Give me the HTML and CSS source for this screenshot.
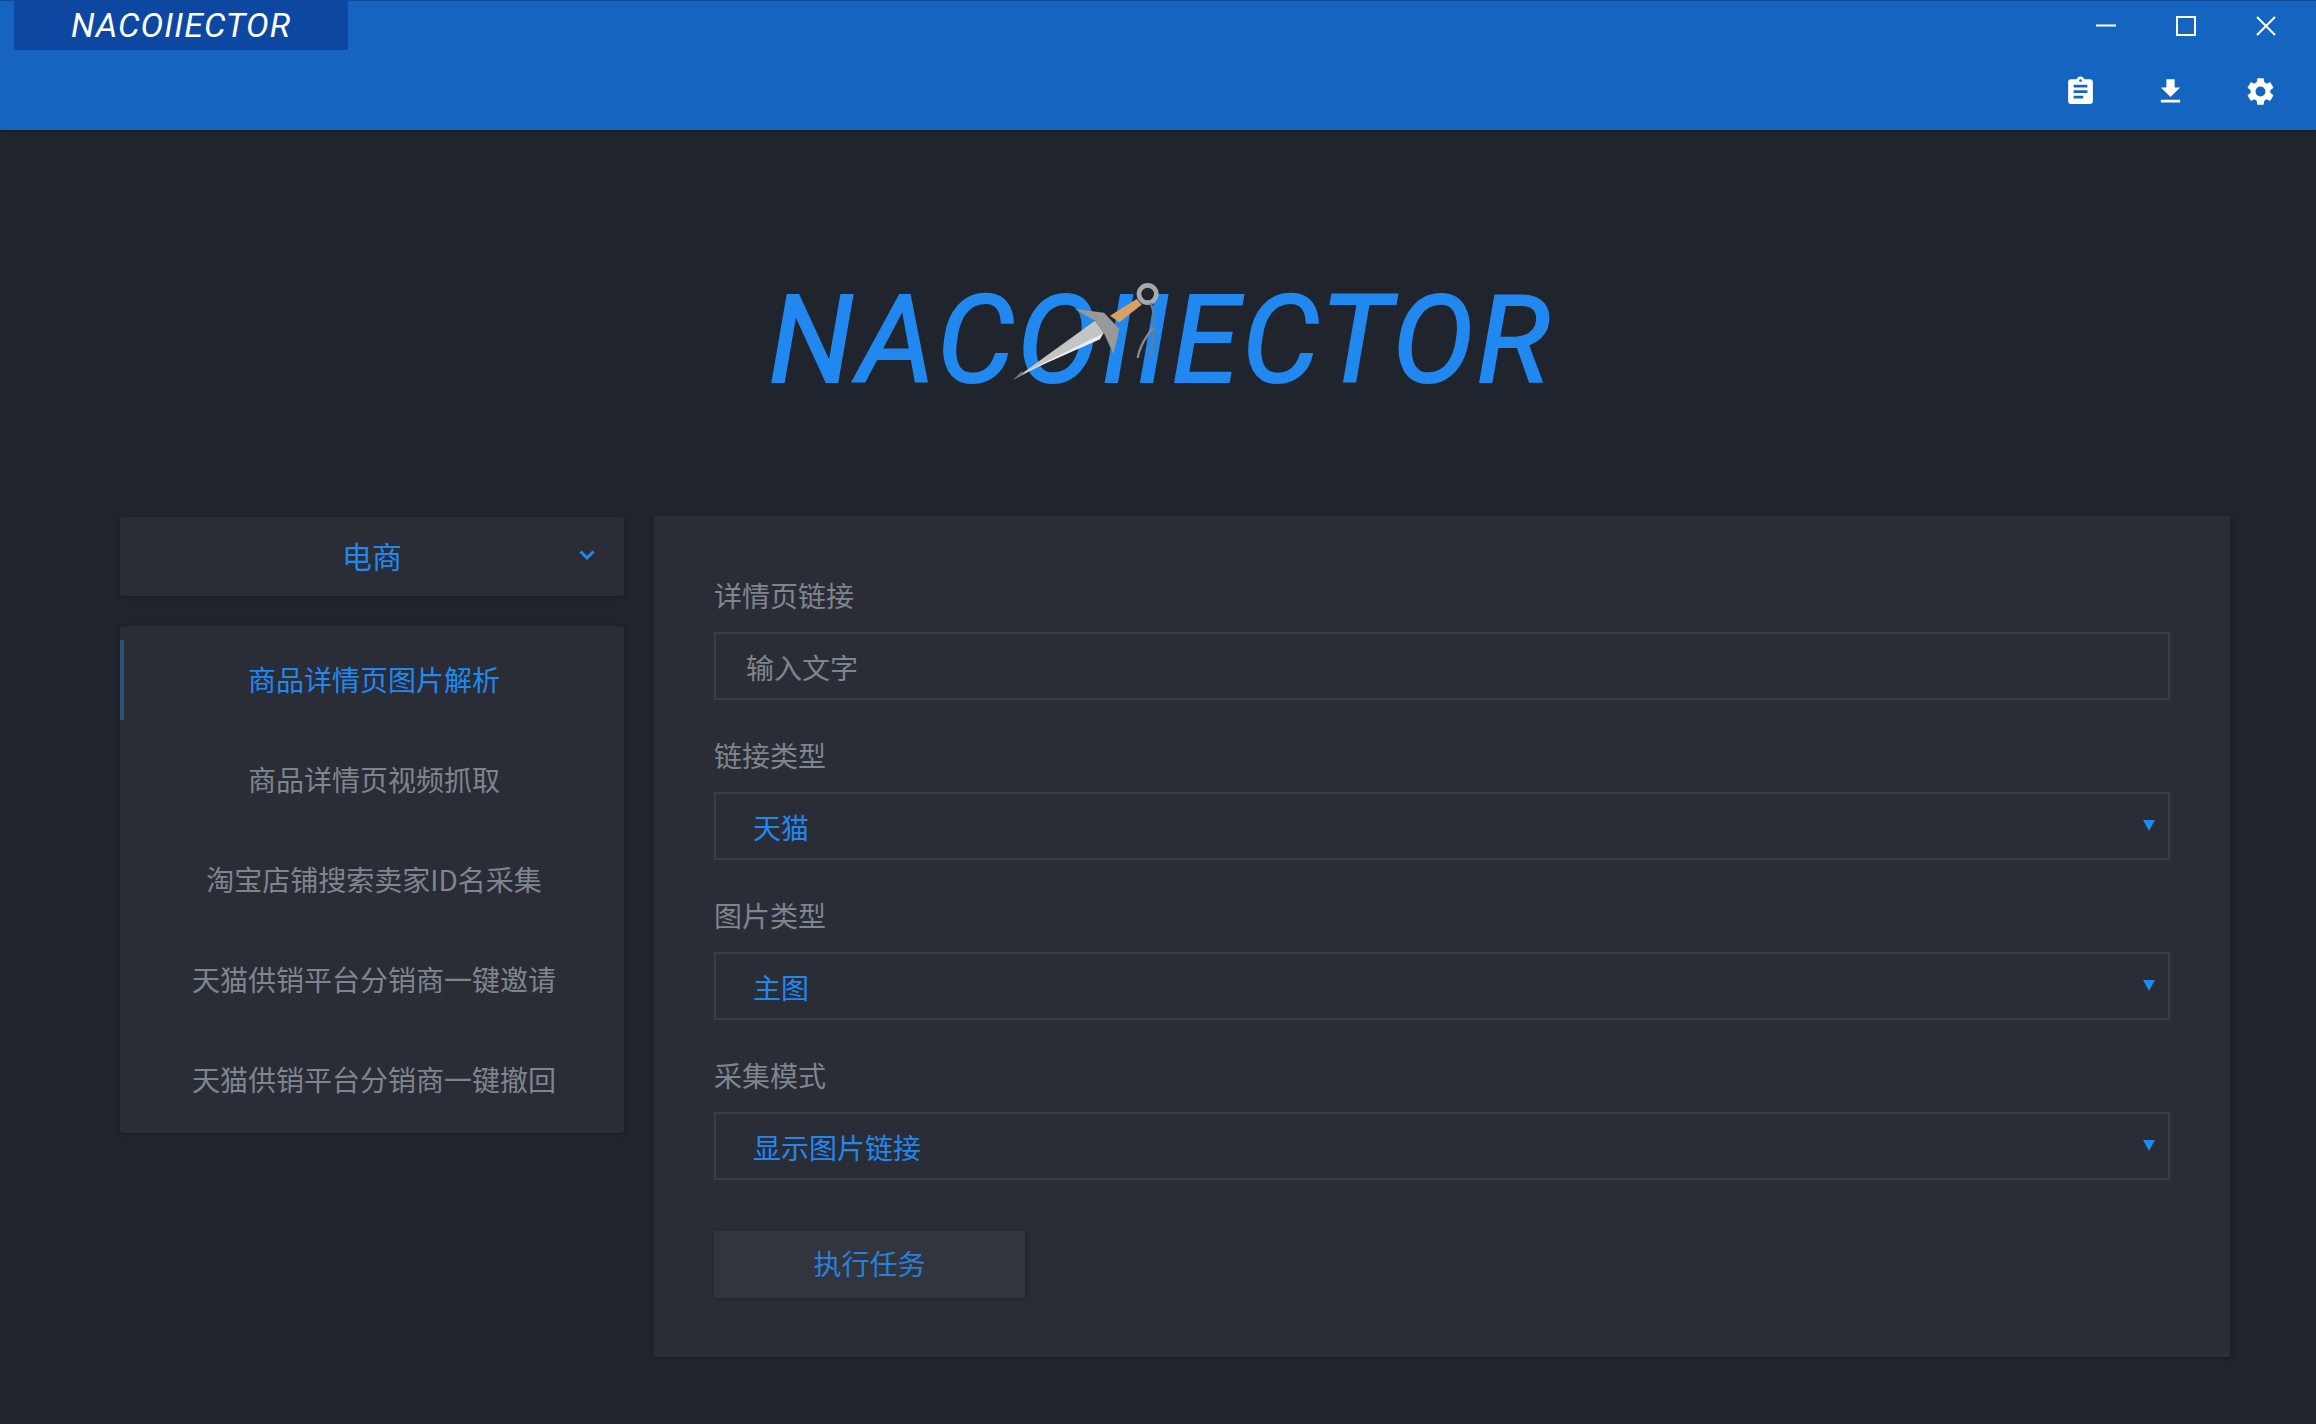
FILE: index.html
```html
<!DOCTYPE html>
<html lang="zh-CN">
<head>
    <meta charset="UTF-8">
    <title>NACOIIECTOR</title>
    <link rel="stylesheet" href="styles.css">
</head>
<body>
    <header class="titlebar">
        <div class="title-row">
            <div class="app-title">NACOIIECTOR</div>
            <div class="window-controls">
                <button class="win-btn">
                    <svg width="20" height="20" viewBox="0 0 20 20"><path d="M0 9.5h20" stroke="#fff" stroke-width="2"/></svg>
                </button>
                <button class="win-btn">
                    <svg width="20" height="20" viewBox="0 0 20 20"><rect x="1" y="1" width="18" height="18" fill="none" stroke="#fff" stroke-width="2"/></svg>
                </button>
                <button class="win-btn">
                    <svg width="20" height="20" viewBox="0 0 20 20"><path d="M1 1l18 18M19 1L1 19" stroke="#fff" stroke-width="2"/></svg>
                </button>
            </div>
        </div>
        <div class="tool-row">
            <button class="tool-btn">
                <svg width="33" height="33" viewBox="0 0 24 24" fill="#fff"><path d="M19 3h-4.18C14.4 1.84 13.3 1 12 1c-1.3 0-2.4.84-2.82 2H5c-1.1 0-2 .9-2 2v14c0 1.1.9 2 2 2h14c1.1 0 2-.9 2-2V5c0-1.1-.9-2-2-2zm-7 0c.55 0 1 .45 1 1s-.45 1-1 1-1-.45-1-1 .45-1 1-1zm2 14H7v-2h7v2zm3-4H7v-2h10v2zm0-4H7V7h10v2z"/></svg>
            </button>
            <button class="tool-btn">
                <svg width="33" height="33" viewBox="0 0 24 24" fill="#fff"><path d="M19 9h-4V3H9v6H5l7 7 7-7zM5 18v2h14v-2H5z"/></svg>
            </button>
            <button class="tool-btn">
                <svg width="33" height="33" viewBox="0 0 24 24" fill="#fff"><path d="M19.14 12.94c.04-.3.06-.61.06-.94 0-.32-.02-.64-.07-.94l2.03-1.58c.18-.14.23-.41.12-.61l-1.92-3.32c-.12-.22-.37-.29-.59-.22l-2.39.96c-.5-.38-1.03-.7-1.62-.94l-.36-2.54c-.04-.24-.24-.41-.48-.41h-3.84c-.24 0-.43.17-.47.41l-.36 2.54c-.59.24-1.13.57-1.62.94l-2.39-.96c-.22-.08-.47 0-.59.22L2.74 8.87c-.12.21-.08.47.12.61l2.03 1.58c-.05.3-.09.63-.09.94s.02.64.07.94l-2.03 1.58c-.18.14-.23.41-.12.61l1.92 3.32c.12.22.37.29.59.22l2.39-.96c.5.38 1.03.7 1.62.94l.36 2.54c.05.24.24.41.48.41h3.84c.24 0 .44-.17.47-.41l.36-2.54c.59-.24 1.13-.56 1.62-.94l2.39.96c.22.08.47 0 .59-.22l1.92-3.32c.12-.22.07-.47-.12-.61l-2.01-1.58zM12 15.6c-1.98 0-3.6-1.62-3.6-3.6s1.62-3.6 3.6-3.6 3.6 1.62 3.6 3.6-1.62 3.6-3.6 3.6z"/></svg>
            </button>
        </div>
    </header>

    <section class="logo-area">
        <div class="logo">
            <span class="logo-text">NACOIIECTOR</span>
            <svg class="kunai" width="280" height="150" viewBox="0 0 840 450">
                <path d="M450 155L530 105 545 122 478 175z" fill="#d9a066"/>
                <circle cx="563" cy="90" r="26" fill="none" stroke="#a9a9a9" stroke-width="14"/>
                <path d="M572 118C592 160 578 230 572 282" fill="none" stroke="#5f7f9c" stroke-width="7"/>
                <path d="M578 190C560 220 538 245 533 282" fill="none" stroke="#8a8a8a" stroke-width="7"/>
                <path d="M345 135L432 146 478 195 460 270 432 208 405 170z" fill="#999"/>
                <path d="M160 347L405 170 432 208z" fill="#c4c4c4"/>
                <path d="M185 330L430 208 420 226z" fill="#eceef2"/>
                <path d="M160 347L185 322 190 330z" fill="#777"/>
            </svg>
        </div>
    </section>

    <main class="content">
        <aside class="sidebar">
            <div class="category card">
                <span>电商</span>
                <svg class="chevron" width="16" height="11" viewBox="0 0 16 11"><path d="M1.5 1.5L8 8l6.500-6.500" fill="none" stroke="#2188f0" stroke-width="3"/></svg>
            </div>
            <nav class="menu card">
                <a class="menu-item active">商品详情页图片解析</a>
                <a class="menu-item">商品详情页视频抓取</a>
                <a class="menu-item">淘宝店铺搜索卖家ID名采集</a>
                <a class="menu-item">天猫供销平台分销商一键邀请</a>
                <a class="menu-item">天猫供销平台分销商一键撤回</a>
            </nav>
        </aside>

        <section class="form-panel">
            <div class="field">
                <label>详情页链接</label>
                <input class="text-input" type="text" placeholder="输入文字">
            </div>
            <div class="field">
                <label>链接类型</label>
                <div class="select-box"><span>天猫</span><i class="arrow"></i></div>
            </div>
            <div class="field">
                <label>图片类型</label>
                <div class="select-box"><span>主图</span><i class="arrow"></i></div>
            </div>
            <div class="field">
                <label>采集模式</label>
                <div class="select-box"><span>显示图片链接</span><i class="arrow"></i></div>
            </div>
            <button class="run-btn">执行任务</button>
        </section>
    </main>
</body>
</html>
```

FILE: styles.css
```css
* {
    box-sizing: border-box;
}
html, body {
    height: 100%;
}
body {
    margin: 0;
    height: 1424px;
    overflow: hidden;
    background: #20242c;
    color: #7f858c;
    font-family: "Noto Sans CJK SC", "Noto Sans", sans-serif;
    font-size: 28px;
}
button {
    border: none;
    background: none;
    padding: 0;
    font: inherit;
    cursor: pointer;
}

/* title bar */
.titlebar {
    height: 130px;
    background: #1565c0;
    border-top: 1px solid #0f4c9c;
    box-shadow: 0 1px 2px rgba(0, 0, 0, 0.3);
}
.title-row {
    display: flex;
    justify-content: space-between;
    height: 50px;
    padding: 0 10px 0 14px;
}
.app-title {
    width: 334px;
    height: 49px;
    background: #0d47a1;
    color: #fff;
    font-family: Roboto, sans-serif;
    font-style: italic;
    font-size: 34px;
    line-height: 49px;
    letter-spacing: 1px;
    text-align: center;
}
.window-controls {
    display: flex;
}
.win-btn {
    display: flex;
    align-items: center;
    justify-content: center;
    width: 80px;
    height: 50px;
}
.tool-row {
    display: flex;
    justify-content: flex-end;
    padding: 0 11px 0 0;
}
.tool-btn {
    display: flex;
    align-items: center;
    justify-content: center;
    width: 90px;
    height: 81px;
}

/* logo */
.logo-area {
    display: flex;
    justify-content: center;
    height: 386px;
    padding-top: 134px;
}
.logo {
    position: relative;
    width: 790px;
    height: 130px;
}
.logo-text {
    display: block;
    padding: 12px 0 0 6px;
    color: #2188f0;
    font-family: Roboto, sans-serif;
    font-style: italic;
    font-size: 122px;
    line-height: 130px;
    letter-spacing: 3px;
    -webkit-text-stroke: 2px #2188f0;
    white-space: nowrap;
}
.kunai {
    position: absolute;
    left: 197px;
    top: 0;
}

/* two columns */
.content {
    display: flex;
    align-items: flex-start;
    gap: 30px;
    padding: 0 86px 0 120px;
}
.card {
    background: #2a2d36;
    border-radius: 4px;
    box-shadow: 0 1px 4px rgba(0, 0, 0, 0.25);
}
.sidebar {
    flex: none;
    width: 504px;
    padding-top: 1px;
}
.category {
    position: relative;
    height: 79px;
    margin-bottom: 30px;
    color: #2188f0;
    font-size: 30px;
    line-height: 76px;
    text-align: center;
}
.chevron {
    position: absolute;
    right: 29px;
    top: 33px;
}
.menu {
    display: flex;
    flex-direction: column;
    gap: 20px;
    padding: 14px 0 13px;
}
.menu-item {
    height: 80px;
    border-left: 4px solid transparent;
    line-height: 78px;
    text-align: center;
    white-space: nowrap;
}
.menu-item.active {
    border-left-color: #2a5577;
    color: #2188f0;
}

/* form */
.form-panel {
    flex: 1;
    height: 841px;
    padding: 58px 60px 0;
    background: #2a2d36;
    box-shadow: 1px 1px 4px rgba(0, 0, 0, 0.3);
}
.field {
    height: 160px;
}
.field label {
    display: block;
    height: 58px;
    line-height: 42px;
}
.text-input,
.select-box {
    width: 100%;
    height: 68px;
    border: 2px solid #383c46;
    background: transparent;
}
.text-input {
    display: block;
    padding: 2px 30px 0;
    color: #7f858c;
    font: inherit;
    outline: none;
}
.text-input::placeholder {
    color: #7f858c;
    opacity: 1;
}
.select-box {
    display: flex;
    align-items: center;
    justify-content: space-between;
    padding: 1px 13px 0 37px;
    color: #2188f0;
}
.arrow {
    width: 0;
    height: 0;
    margin-bottom: 3px;
    border-left: 6px solid transparent;
    border-right: 6px solid transparent;
    border-top: 11px solid #2188f0;
}
.run-btn {
    width: 311px;
    height: 67px;
    margin-top: 17px;
    padding-bottom: 4px;
    background: #32353e;
    color: #2a7fd8;
    box-shadow: 2px 1px 4px rgba(0, 0, 0, 0.2);
}
```
